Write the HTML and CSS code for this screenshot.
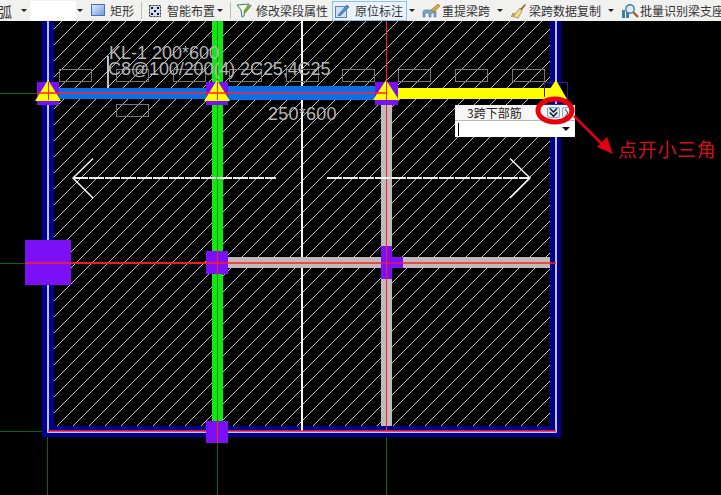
FILE: index.html
```html
<!DOCTYPE html>
<html lang="zh">
<head>
<meta charset="utf-8">
<title>原位标注</title>
<link rel="stylesheet" href="styles.css">
</head>
<body>
<div class="app">
  <div class="toolbar">
    <span class="lbl cut">弧</span><span class="caret c1"></span>
    <span class="field"></span><span class="caret c2"></span>
    <span class="tool t-rect">
      <svg class="ico" width="14" height="13" viewBox="0 0 14 13"><defs><linearGradient id="rg" x1="0" y1="0" x2="1" y2="1"><stop offset="0" stop-color="#e4eefc"/><stop offset="1" stop-color="#6f9ae0"/></linearGradient></defs><rect x=".5" y=".5" width="13" height="11" fill="url(#rg)" stroke="#4a6fb0"/></svg>
      <span class="lbl">矩形</span>
    </span>
    <span class="sep s1"></span>
    <span class="tool t-smart">
      <svg class="ico" width="14" height="14" viewBox="0 0 14 14"><rect x="1.500" y="1.500" width="11" height="11" fill="#cfdcf0" stroke="#333" stroke-dasharray="2 1"/><path d="M3 3h2v2H3zM9 3h2v2H9zM6 6h2v2H6zM3 9h2v2H3zM9 9h2v2H9z" fill="#111"/></svg>
      <span class="lbl">智能布置</span>
    </span><span class="caret c3"></span>
    <span class="sep s2"></span>
    <span class="tool t-edit">
      <svg class="ico" width="17" height="15" viewBox="0 0 17 15"><path d="M1 2l12-1-4 6-1 6-2 1-1-7z" fill="#f3f6d8" stroke="#2d7d7d"/><path d="M8 10l7-8" stroke="#7a9a2a" stroke-width="2"/></svg>
      <span class="lbl">修改梁段属性</span>
    </span>
    <span class="sep s3"></span>
    <span class="tool pressed">
      <svg class="ico" width="15" height="15" viewBox="0 0 15 15"><rect x=".5" y="3.500" width="11" height="11" fill="#cfe0f4" stroke="#5c83b8"/><path d="M4 11L12 2l2 2-8 8-3 1z" fill="#5b8fd0" stroke="#2f5f9e" stroke-width=".7"/></svg>
      <span class="lbl">原位标注</span>
    </span><span class="caret c4"></span>
    <span class="tool t-lift">
      <svg class="ico" width="19" height="15" viewBox="0 0 19 15"><path d="M1 14V9q0-2 2-2h9q2 0 2 2v5h-2v-4H9v4H7v-4H3v4z" fill="#7fa3c8" stroke="#4d7297" stroke-width=".6"/><path d="M9 7l7-6 2 2-6 6z" fill="#d9a84a" stroke="#8a6a25" stroke-width=".6"/></svg>
      <span class="lbl">重提梁跨</span>
    </span><span class="caret c5"></span>
    <span class="tool t-brush">
      <svg class="ico" width="17" height="16" viewBox="0 0 17 16"><path d="M10 6l5-5 1 1-5 6z" fill="#8a6a2a"/><path d="M10 5l2 3-4 7-7-2 4-1-3-1 4-1z" fill="#f0dc8c" stroke="#8f7a3a" stroke-width=".7"/></svg>
      <span class="lbl">梁跨数据复制</span>
    </span><span class="caret c6"></span>
    <span class="tool t-batch">
      <svg class="ico" width="18" height="16" viewBox="0 0 18 16"><path d="M1 15V7h3v8zM5 15V9h3v6z" fill="#3f7f9f"/><circle cx="9" cy="6" r="4.200" fill="#dcecf5" stroke="#3f7f9f" stroke-width="1.400"/><path d="M12 9l5 5" stroke="#b05a28" stroke-width="2.400"/></svg>
      <span class="lbl">批量识别梁支座</span>
    </span>
  </div>
  <div class="canvas">
    <svg class="drawing" width="721" height="474" viewBox="0 21 721 474">
      <defs>
        <pattern id="hatch" width="16" height="16" patternUnits="userSpaceOnUse" patternTransform="translate(3 0)">
          <path d="M-1 17L17 -1M-1 1L1 -1M15 17L17 15" stroke="#c4c4c4" stroke-width="1" fill="none"/>
        </pattern>
      </defs>
      <rect x="54" y="21" width="496" height="405" fill="url(#hatch)"/>
      <g fill="#000090">
        <rect x="42" y="21" width="12" height="416"/>
        <rect x="550" y="21" width="11" height="416"/>
        <rect x="42" y="426" width="519" height="11"/>
      </g>
      <g stroke="#fff" fill="none">
        <path d="M48 21V432H556V21" stroke-width="1.500"/>
        <path d="M302 21V431" stroke-width="2"/>
        <path d="M108 56V93" stroke-width="1.500"/>
      </g>
      <g fill="none" stroke="#006a00">
        <path d="M0 93.500H37M0 263.500H25M217.500 437V495M386.500 437V495M47.500 437V495M0 431.500H42"/>
      </g>
      <rect x="212" y="21" width="11" height="405" fill="#14e614"/>
      <path d="M217.500 21V426" stroke="#0a8a10"/>
      <rect x="381" y="100" width="11" height="326" fill="#c0baba"/>
      <rect x="228" y="257" width="322" height="11" fill="#c0baba"/>
      <path d="M386.500 21V431" stroke="#ff2020" fill="none"/>
      <path d="M25 263H556M48 431H556" stroke="#ff2020" stroke-width="1.500" fill="none"/>
      <g fill="none" stroke="#777">
        <rect x="59.500" y="69.500" width="32" height="12"/>
        <rect x="116.500" y="69.500" width="32" height="12"/>
        <rect x="173.500" y="69.500" width="32" height="12"/>
        <rect x="229.500" y="69.500" width="32" height="12"/>
        <rect x="286.500" y="69.500" width="32" height="12"/>
        <rect x="342.500" y="69.500" width="32" height="12"/>
        <rect x="398.500" y="69.500" width="32" height="12"/>
        <rect x="455.500" y="69.500" width="32" height="12"/>
        <rect x="512.500" y="69.500" width="32" height="12"/>
        <rect x="116.500" y="104.500" width="32" height="12"/>
      </g>
      <rect x="54" y="88" width="164" height="11" fill="#0a6ee6"/>
      <rect x="218" y="86" width="168" height="14" fill="#0a6ee6"/>
      <rect x="386" y="88" width="170" height="11" fill="#ffff00"/>
      <path d="M37 93H386" stroke="#ff2828" stroke-width="1.500"/>
      <g fill="#7b0ff5">
        <rect x="37" y="82" width="22" height="23"/>
        <rect x="206" y="82" width="22" height="23"/>
        <rect x="375" y="82" width="23" height="23"/>
        <rect x="25" y="240" width="46" height="45"/>
        <rect x="206" y="251" width="22" height="23"/>
        <rect x="381" y="246" width="11" height="33"/>
        <rect x="392" y="257" width="11" height="11"/>
        <rect x="206" y="421" width="22" height="22"/>
      </g>
      <rect x="544.500" y="82.500" width="23" height="22" fill="none" stroke="#3a1a90"/>
      <g fill="#ffff00">
        <path d="M48 80L61 101H35z"/>
        <path d="M217 80L230 101H204z"/>
        <path d="M386 80L399 100H373z"/>
        <path d="M556 80L567 99H543z"/>
      </g>
      <g stroke="#ff2020" fill="none">
        <path d="M48.500 82V100M217.500 82V100M386.500 21V100M381 263H403M217.500 251V274M386.500 246V279M217.500 421V443"/>
        <path d="M25 263H229M37 93H60M206 93H230M375 93H386" stroke-width="1.500"/>
      </g>
      <g class="cad-text">
        <text x="109" y="59">KL-1 200*600</text>
        <text class="tight" x="108" y="75">C8@100/200(4) 2C25;4C25</text>
        <text class="wide" x="268" y="120">250*600</text>
      </g>
      <g stroke="#f4f4f4" fill="none">
        <path d="M73 178H276M327 178H530" stroke-width="2" stroke-dasharray="15 1"/>
        <path d="M93 158.500L73 178L93 198M510 158.500L530 178L510 198" stroke-width="1.500"/>
      </g>
    </svg>
    <div class="popup">
      <div class="pop-head">
        <span class="pop-title">3跨下部筋</span>
        <span class="pop-btn"><svg width="12" height="11" viewBox="0 0 12 11"><path d="M2 1l4 4 4-4M2 5.500l4 4 4-4" fill="none" stroke="#111" stroke-width="1.500"/></svg></span>
        <span class="pop-btn narrow"><svg width="5" height="8" viewBox="0 0 5 8"><path d="M1 0l3 4-3 4" fill="none" stroke="#333"/></svg></span>
      </div>
      <div class="pop-input"><span class="cursor"></span><span class="pop-caret"></span></div>
    </div>
    <svg class="annot" width="721" height="474" viewBox="0 21 721 474">
      <ellipse cx="555" cy="110.500" rx="17" ry="11.500" fill="none" stroke="#e8000a" stroke-width="5"/>
      <path d="M574 116L604 146" stroke="#e00010" stroke-width="2.500"/>
      <path d="M613 154L597 147L607 137z" fill="#e00010"/>
      <text class="note" x="618" y="157">点开小三角</text>
    </svg>
  </div>
</div>
</body>
</html>
```

FILE: styles.css
```css
* { box-sizing: border-box; }
html, body { margin: 0; padding: 0; background: #000; }
body { width: 721px; height: 495px; overflow: hidden; font-family: "Noto Sans CJK SC", "Liberation Sans", sans-serif; }
.app { display: flex; flex-direction: column; width: 721px; height: 495px; }
.toolbar {
  display: flex; align-items: center; flex: none; height: 21px; width: 721px;
  overflow: hidden; white-space: nowrap; background: #f1f1ef; color: #333;
}
.lbl { font-size: 12px; line-height: 16px; flex: none; }
.cut { margin-left: -2px; font-size: 14px; }
.tool { display: flex; align-items: center; flex: none; gap: 5px; }
.ico { flex: none; }
.caret { flex: none; width: 0; height: 0; border: 3px solid transparent; border-top: 3.500px solid #222; border-bottom: 0; }
.c1 { margin-left: 9px; }
.c2 { margin-left: 1px; }
.c3 { margin-left: 2px; }
.c4 { margin-left: 2px; }
.c5 { margin-left: 7px; }
.c6 { margin-left: 7px; }
.field { flex: none; width: 46px; height: 20px; margin-left: 3px; background: #fff; }
.t-rect { margin-left: 8px; }
.sep { flex: none; width: 1px; height: 17px; background: #bcbcb8; }
.s1 { margin-left: 7px; }
.s2 { margin-left: 7px; }
.s3 { visibility: hidden; }
.t-smart { margin-left: 6px; }
.t-edit { margin-left: 5px; gap: 3px; }
.pressed {
  height: 20px; width: 75px; margin-left: 3px; padding-left: 2px;
  background: #eaf3fb; border: 1px solid #8fc0e0;
}
.t-lift { margin-left: 7px; gap: 1px; }
.t-brush { margin-left: 7px; gap: 2px; }
.t-batch { margin-left: 7px; gap: 1px; }
.canvas { position: relative; flex: 1; background: #000; overflow: hidden; }
.drawing, .annot { display: block; position: absolute; left: 0; top: 0; }
.annot { z-index: 2; }
.cad-text text { font-family: "Liberation Sans", sans-serif; font-size: 18px; fill: #b4b4b4; }
.cad-text .tight { letter-spacing: -.09px; }
.cad-text .wide { letter-spacing: .25px; }
.note { font-family: "Noto Sans CJK SC", sans-serif; font-size: 19px; letter-spacing: .7px; fill: #d01018; }
.popup { position: absolute; left: 455px; top: 84px; width: 120px; height: 32px; background: #fff; z-index: 1; display: flex; flex-direction: column; }
.pop-head { display: flex; align-items: center; height: 15px; flex: none; padding-left: 12px; background: #f7f7f5; }
.pop-title { font-size: 12px; line-height: 15px; color: #222; width: 80px; flex: none; }
.pop-btn { display: flex; align-items: center; justify-content: center; flex: none; width: 13px; height: 11px; margin-right: 2px; background: #d6e4f2; border: 1px solid #8aa5c4; border-radius: 2px; }
.pop-btn.narrow { width: 8px; background: #eee; }
.pop-input { flex: 1; display: flex; align-items: center; justify-content: space-between; padding: 0 3px; border-top: 1px solid #b8b8b8; }
.cursor { width: 1px; height: 13px; background: #000; }
.pop-caret { width: 0; height: 0; margin-right: 2px; border: 4px solid transparent; border-top: 4px solid #111; border-bottom: 0; }
```
